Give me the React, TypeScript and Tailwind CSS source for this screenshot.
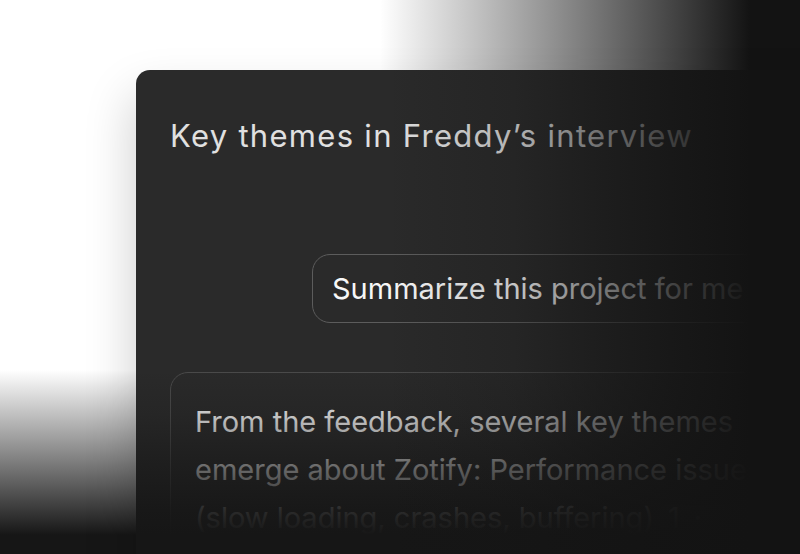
import React from 'react';

// Faded preview of the assistant panel: card sits on a white page that
// darkens towards the right and bottom edges.
export default function App() {
    return (
        <div className="relative h-[554px] w-[800px] overflow-hidden bg-white bg-[linear-gradient(to_right,transparent_380px,#131313_750px),linear-gradient(to_bottom,transparent_370px,#161616_535px)] pl-[136px] pt-[70px] font-['Inter','Noto_Sans',sans-serif]">
            <div className="relative h-[560px] w-[720px] overflow-hidden rounded-[14px] bg-[#2a2a2a] pl-[34px] pt-[49px] shadow-[-4px_24px_48px_rgba(0,0,0,0.18)]">
                <h1 className="whitespace-nowrap text-[31px] font-normal leading-[34px] tracking-[1.3px] text-[#e0e0e0]">
                    Key themes in Freddy’s interview
                </h1>

                {/* user message */}
                <div className="ml-[142px] mt-[101px] h-[69px] w-[470px] whitespace-nowrap rounded-[18px] border border-[#5c5c5c] px-[19px] pt-[17px] text-[29px] leading-[34px] text-[#f7f7f7]">
                    Summarize this project for me
                </div>

                {/* assistant answer */}
                <div className="mt-[49px] w-[640px] rounded-[18px] border border-[#4a4a4a] pb-[40px] pl-[24px] pt-[25px] text-[29px] leading-[48px] text-[#f0f0f0]">
                    <p className="whitespace-nowrap">From the feedback, several key themes</p>
                    <p className="whitespace-nowrap">emerge about Zotify: Performance issues</p>
                    <p className="whitespace-nowrap">
                        (slow loading, crashes, buffering)
                        <span className="ml-[6px] inline-block h-[44px] w-[135px] rounded-[6px] border-r border-[#6a6a6a] bg-[#3a3a3a] pl-[8px] align-baseline leading-[26px]">
                            1<span className="ml-[14px]">·</span>
                        </span>
                    </p>
                </div>

                <div className="pointer-events-none absolute inset-0 bg-[linear-gradient(to_right,transparent_250px,rgba(19,19,19,0.22)_379px,rgba(19,19,19,0.55)_464px,rgba(19,19,19,0.8)_540px,rgba(19,19,19,0.95)_600px,#131313_614px),linear-gradient(to_bottom,transparent_300px,rgba(22,22,22,0.2)_345px,rgba(22,22,22,0.6)_395px,rgba(22,22,22,0.91)_442px,#161616_465px)]" />
            </div>
        </div>
    );
}
